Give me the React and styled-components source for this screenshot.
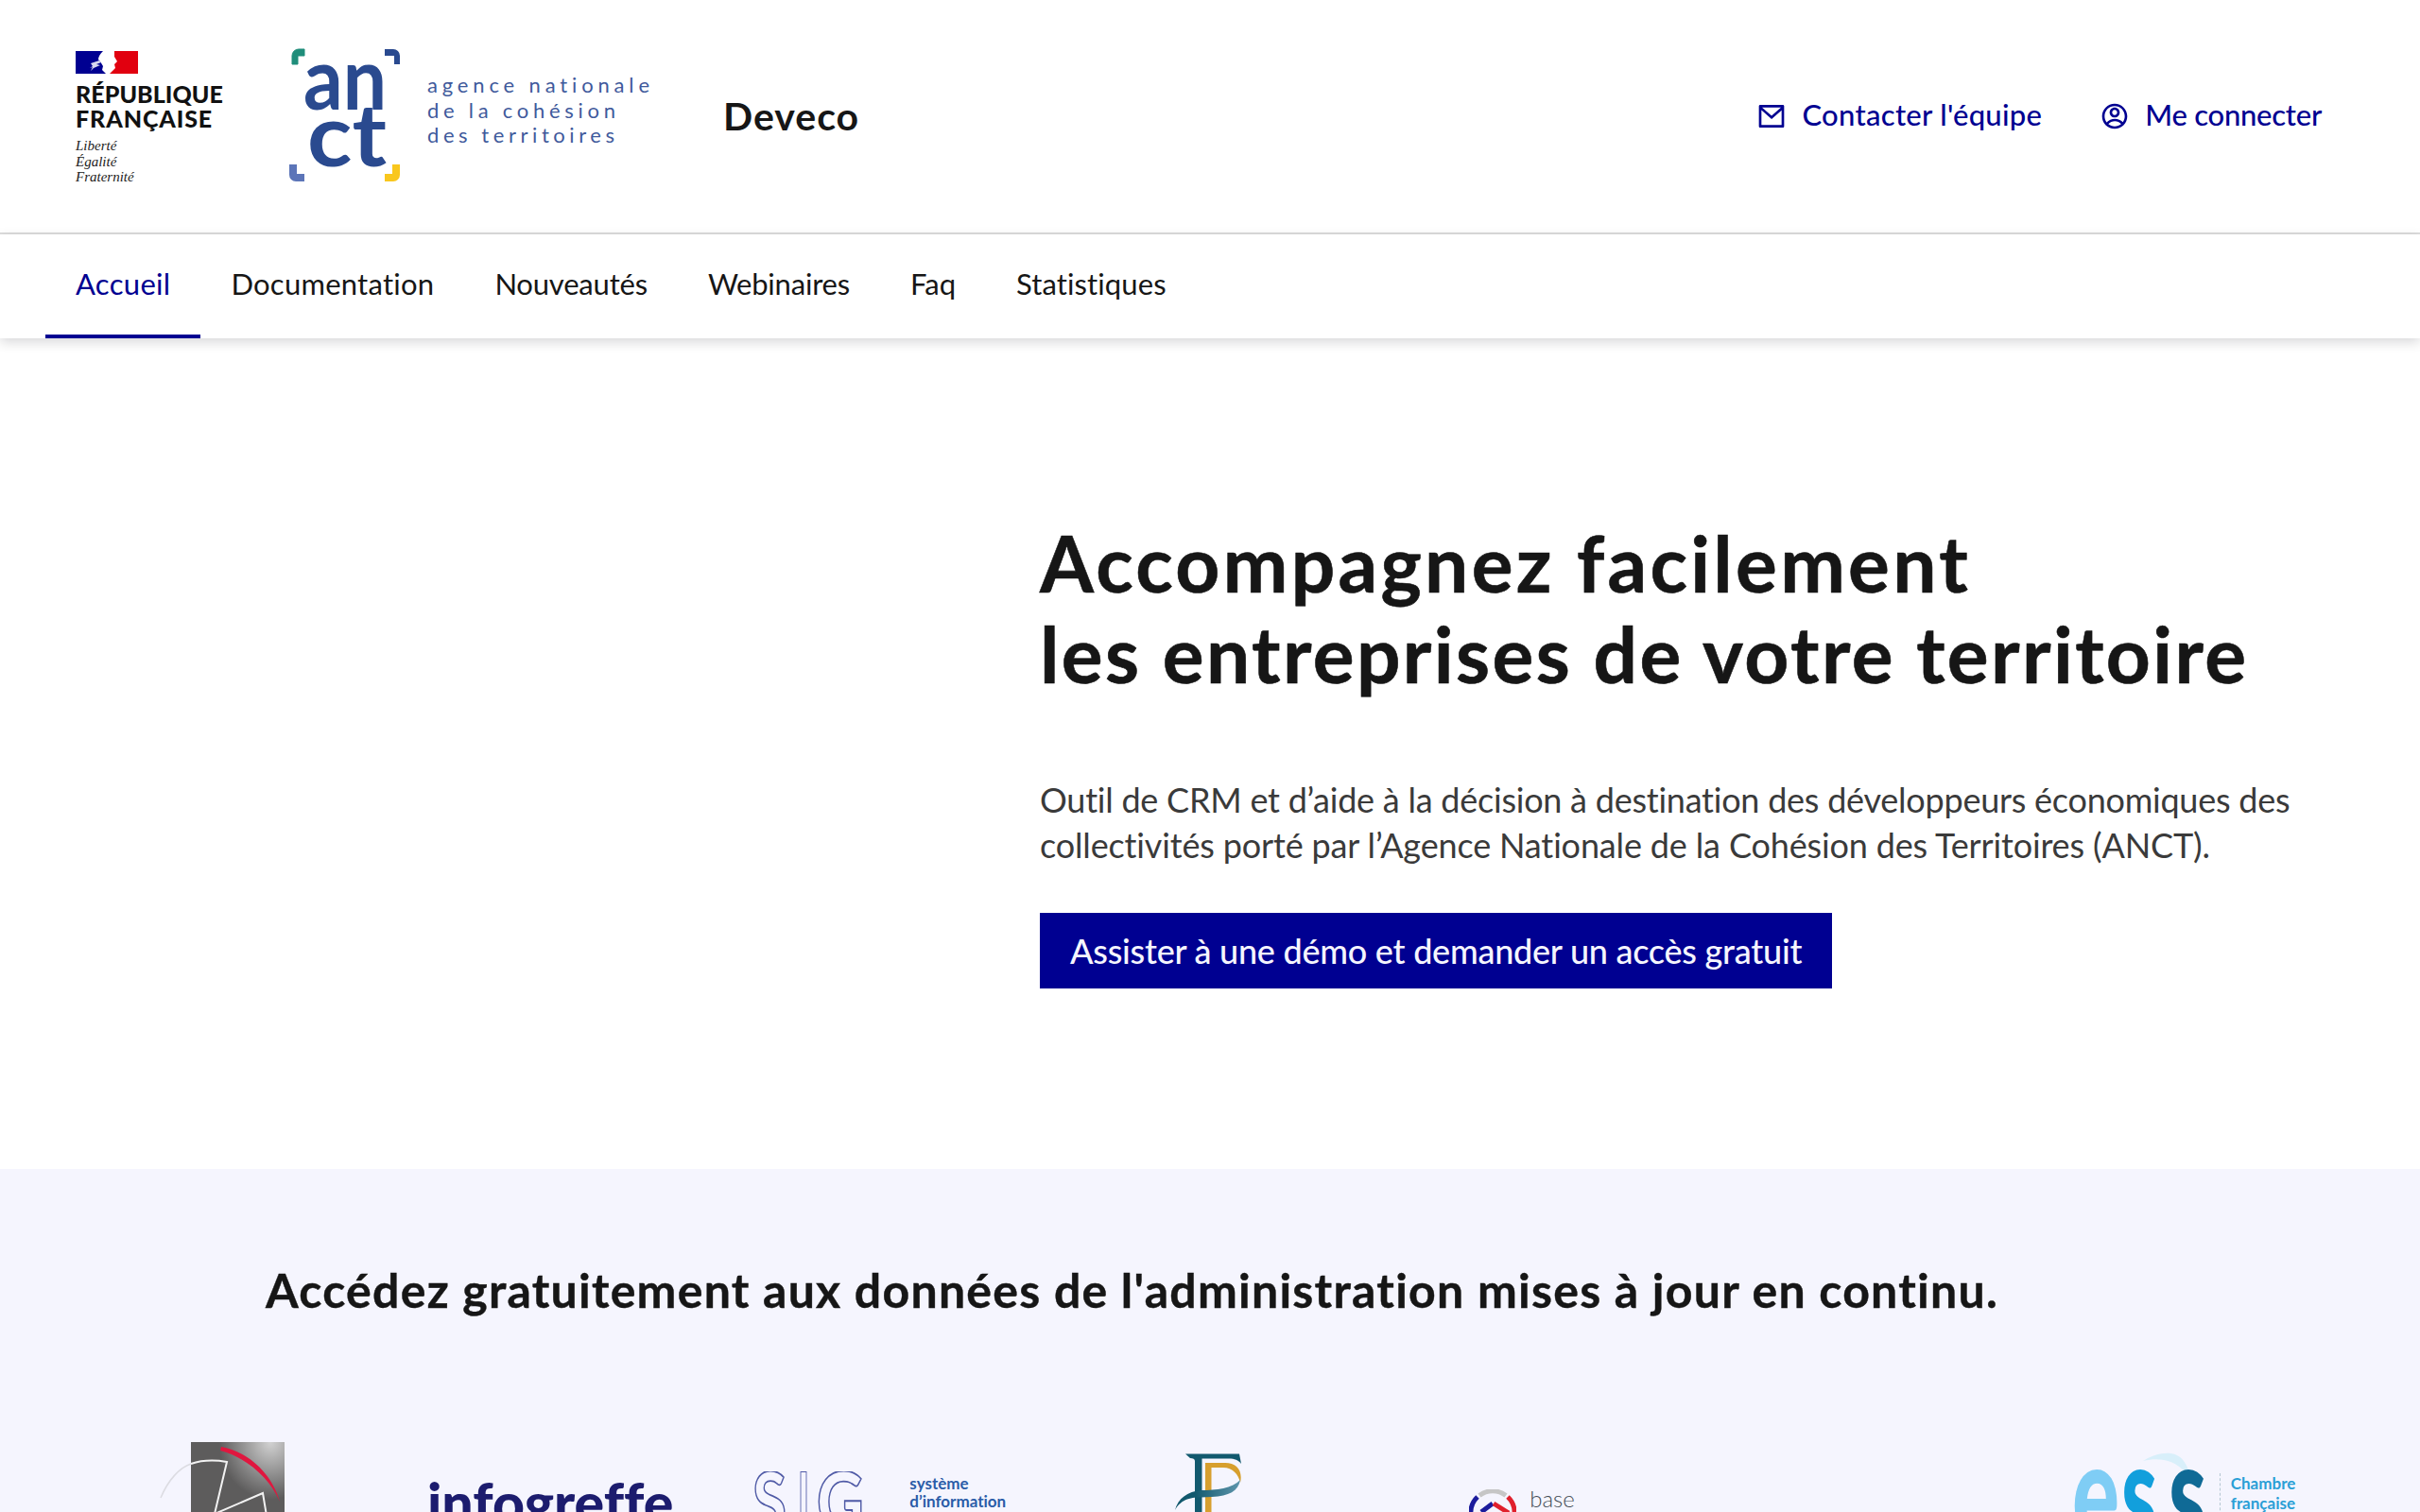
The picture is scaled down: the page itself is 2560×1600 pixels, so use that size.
import React from 'react';
import styled, { createGlobalStyle } from 'styled-components';
import { RiMailLine, RiAccountCircleLine } from 'react-icons/ri';

const GlobalStyle = createGlobalStyle`
  html, body {
    margin: 0;
    padding: 0;
    overflow: hidden;
    background: #fff;
    font-family: Lato, "Open Sans", sans-serif;
    font-variant-ligatures: none;
    color: #161616;
  }
`;

const Page = styled.div`
  height: 1600px;
  overflow: hidden;
`;

const Header = styled.header`
  display: flex;
  align-items: flex-start;
  height: 246px;
  padding: 0 104px 0 80px;
  border-bottom: 2px solid #ddd;
`;

const Marianne = styled.div`
  width: 225px;
  padding-top: 54px;
`;

const Republique = styled.div`
  margin-top: 8px;
  font-size: 25px;
  line-height: 26px;
  font-weight: 900;
  color: #111;
`;

const RepubliqueLine = styled.span`
  display: block;
  letter-spacing: ${(p) => p.$spacing}px;
`;

const Devise = styled.div`
  margin-top: 8px;
  font-family: "Liberation Serif", serif;
  font-style: italic;
  font-size: 15px;
  line-height: 16.5px;
  color: #222;
`;

const Anct = styled.svg`
  display: block;
  margin-top: 50px;
  flex: none;
`;

const Service = styled.div`
  margin: 98px 0 0 60px;
  font-size: 41px;
  line-height: 50px;
  font-weight: 700;
  letter-spacing: 1px;
`;

const Tools = styled.div`
  display: flex;
  gap: 61px;
  margin: 101px 0 0 auto;
`;

const Tool = styled.a`
  display: flex;
  align-items: center;
  gap: 16px;
  font-size: 31px;
  line-height: 40px;
  font-weight: 500;
  letter-spacing: ${(p) => p.$spacing}px;
  color: #000091;
  svg {
    width: 32px;
    height: 32px;
    margin-top: 3px;
  }
`;

const Nav = styled.nav`
  position: relative;
  display: flex;
  height: 110px;
  padding-left: 48px;
  background: #fff;
  box-shadow: 0 4px 12px rgba(0, 0, 18, 0.16);
`;

const NavItem = styled.a`
  display: flex;
  align-items: center;
  padding: 0 32px 3px;
  font-size: 31px;
  letter-spacing: ${(p) => p.$spacing}px;
  color: ${(p) => (p.$active ? '#000091' : '#161616')};
  border-bottom: 4px solid ${(p) => (p.$active ? '#000091' : 'transparent')};
  box-sizing: border-box;
`;

const Hero = styled.section`
  height: 879px;
  box-sizing: border-box;
  padding: 189px 0 0 1100px;
`;

const HeroTitle = styled.h1`
  margin: 0;
  font-size: 82px;
  line-height: 96px;
  font-weight: 700;
  -webkit-text-stroke: 0.6px #161616;
  color: #161616;
`;

const HeroText = styled.p`
  margin: 83px 0 0;
  font-size: 36px;
  line-height: 48px;
  color: #3a3a3a;
`;

const Line = styled.span`
  display: block;
  letter-spacing: ${(p) => p.$spacing}px;
`;

const HeroButton = styled.button`
  display: block;
  margin-top: 48px;
  height: 80px;
  padding: 0 32px;
  border: 0;
  background: #000091;
  color: #f5f5fe;
  font-family: inherit;
  font-size: 36px;
  font-weight: 500;
  font-variant-ligatures: none;
  letter-spacing: -0.25px;
`;

const Band = styled.section`
  background: #f5f5fe;
  height: 400px;
  padding-top: 96px;
  box-sizing: border-box;
`;

const BandTitle = styled.h2`
  margin: 0 0 0 281px;
  font-size: 50px;
  line-height: 64px;
  font-weight: 700;
  letter-spacing: 1.25px;
  -webkit-text-stroke: 0.4px #161616;
`;

const LogoRow = styled.div`
  display: flex;
  align-items: flex-start;
  margin-top: 129px;
  padding-left: 168px;
`;

const LogoSlot = styled.div`
  flex: none;
  margin-left: ${(p) => p.$left}px;
  margin-top: ${(p) => p.$top}px;
`;

const Infogreffe = styled.div`
  font-size: 59px;
  line-height: 84px;
  font-weight: 900;
  color: #1c1c6e;
`;

const SmallBlue = styled.div`
  font-size: 17px;
  line-height: ${(p) => p.$lh}px;
  font-weight: 700;
  color: ${(p) => p.$color};
`;

const SigLogo = styled.div`
  display: flex;
  gap: 44px;
  align-items: flex-start;
`;

const SigSide = styled.div`
  margin-top: 3px;
`;

const BaseLogo = styled.div`
  display: flex;
  gap: 14px;
  align-items: flex-start;
`;

const BaseWord = styled.div`
  margin-top: -5px;
  font-size: 24px;
  line-height: 30px;
  font-weight: 300;
  color: #444c55;
`;

const EssLogo = styled.div`
  display: flex;
  align-items: flex-start;
  gap: 11px;
`;

const EssSide = styled.div`
  margin-top: 25px;
  padding-left: 11px;
  height: 60px;
  border-left: 1px dashed #b4c6d2;
`;

const LogoSvg = styled.svg`
  display: block;
`;

const Flag = () => (
  <LogoSvg width="66" height="24" viewBox="0 0 66 24">
    <rect width="66" height="24" fill="#fff" />
    <path d="M0 0H29C26 3 24 6 24 9L26 11L29 16L28 20L32 24H0Z" fill="#000091" />
    <path d="M41 0H66V24H36L39 21L42 18L41 14L44 11L41 6Z" fill="#e1000f" />
    <path d="M16 13l9-3 2 2-5 2 4 1-7 3-3 3 2-4-3 1 3-2z" fill="#fff" opacity="0.85" />
  </LogoSvg>
);

const AnctLogo = () => (
  <Anct width="400" height="144" viewBox="0 0 400 144">
    <path d="M17 2h-6a7 7 0 0 0-7 7v9h6V9h7z" fill="#1f8d7a" stroke="#1f8d7a" strokeWidth="1" />
    <path d="M102 2h9a7 7 0 0 1 7 7v9h-6V9h-10z" fill="#2a4a8f" />
    <path d="M1 124v11a7 7 0 0 0 7 7h9v-8h-8v-10z" fill="#5c75b8" />
    <path d="M118 124v11a7 7 0 0 1-7 7h-9v-8h8v-10z" fill="#f9c71d" />
    <text x="16" y="66" fontFamily="Lato" fontSize="92" fontWeight="700" fill="#2a4a8f" textLength="88" lengthAdjust="spacingAndGlyphs">an</text>
    <text x="20" y="126" fontFamily="Lato" fontSize="92" fontWeight="700" fill="#2a4a8f" textLength="84" lengthAdjust="spacingAndGlyphs">ct</text>
    <g fontFamily="Lato" fontSize="22" fill="#3f5a9c">
      <text x="147" y="48" textLength="235">agence nationale</text>
      <text x="147" y="75" textLength="199">de la cohésion</text>
      <text x="147" y="101" textLength="198">des territoires</text>
    </g>
  </Anct>
);

const GreffeLogo = () => (
  <LogoSvg width="133" height="110" viewBox="0 0 133 110">
    <defs>
      <radialGradient id="greffe" cx="0.85" cy="0" r="0.55">
        <stop offset="0" stopColor="#d2d2d2" />
        <stop offset="1" stopColor="#5d5c5c" />
      </radialGradient>
    </defs>
    <rect x="34" width="99" height="110" fill="url(#greffe)" />
    <path d="M66 5C95 10 120 34 128 63C118 40 95 17 65 9Z" fill="#e0173f" />
    <path d="M2 59C10 40 22 27 34 23" fill="none" stroke="#dcdce2" strokeWidth="1.5" />
    <path d="M34 23C46 19 60 19 72 21L59 76" fill="none" stroke="#f2f2f2" strokeWidth="2" />
    <path d="M59 76L110 54L116 90" fill="none" stroke="#f2f2f2" strokeWidth="2" />
  </LogoSvg>
);

const SigMark = () => (
  <LogoSvg width="122" height="70" viewBox="0 0 122 70">
    <g fontFamily="Lato" fontSize="88" fontWeight="900" fill="none" stroke="#4f5aa6" strokeWidth="1.8">
      <text x="0" y="64" textLength="36" lengthAdjust="spacingAndGlyphs">S</text>
      <text x="48" y="64" textLength="12" lengthAdjust="spacingAndGlyphs">I</text>
      <text x="68" y="64" textLength="50" lengthAdjust="spacingAndGlyphs">G</text>
    </g>
  </LogoSvg>
);

const FpMark = () => (
  <LogoSvg width="75" height="70" viewBox="0 0 75 70">
    <defs>
      <linearGradient id="swoosh" x1="0" y1="0" x2="1" y2="0">
        <stop offset="0.3" stopColor="#12596e" />
        <stop offset="1" stopColor="#5f96ad" />
      </linearGradient>
    </defs>
    <path d="M33 12H54C66 12 73 20 70 33C68 24 62 17 52 17H39.5V70H33Z" fill="#d79f2e" />
    <path d="M12 2.5H69L71 13C68 9 64 7.5 58 7.5H29.5V70H22V10C22 8 20 7 17 7Z" fill="#12596e" />
    <path d="M1 62C4 50 14 42 29 41C44 41 62 39 70 30C68 42 58 47 40 48C26 49 10 46 1 62Z" fill="url(#swoosh)" />
  </LogoSvg>
);

const BaseMark = () => (
  <LogoSvg width="50" height="40" viewBox="0 0 50 40">
    <g fill="none" strokeWidth="5">
      <path d="M11 6.5A23 23 0 0 1 39 6.5" stroke="#c6c6c6" />
      <path d="M9 8A23 23 0 0 0 2 27" stroke="#1c1c9c" />
      <path d="M41 8A23 23 0 0 1 48 27" stroke="#e0202c" />
      <path d="M13 24L25 15" stroke="#1c1c9c" />
      <path d="M26 15L42 25" stroke="#e0202c" />
    </g>
  </LogoSvg>
);

const EssMark = () => (
  <LogoSvg width="145" height="110" viewBox="0 0 145 110">
    <path d="M75 12C90 2 110 0 118 12C125 22 124 28 125 34C118 16 100 6 75 12Z" fill="#d8effa" />
    <g fontFamily="Lato" fontSize="150" fontWeight="900">
      <text x="0" y="100" fill="#7fcdf5" textLength="50" lengthAdjust="spacingAndGlyphs">e</text>
      <text x="52" y="100" fill="#129fdc" textLength="38" lengthAdjust="spacingAndGlyphs">s</text>
      <text x="102" y="100" fill="#0f6a96" textLength="40" lengthAdjust="spacingAndGlyphs">s</text>
    </g>
  </LogoSvg>
);

const navItems = [
  { label: 'Accueil', spacing: 0.3, active: true },
  { label: 'Documentation', spacing: 0.25 },
  { label: 'Nouveautés', spacing: -0.2 },
  { label: 'Webinaires', spacing: -0.2 },
  { label: 'Faq', spacing: 0 },
  { label: 'Statistiques', spacing: 0.1 },
];

export default function App() {
  return (
    <Page>
      <GlobalStyle />
      <Header>
        <Marianne>
          <Flag />
          <Republique>
            <RepubliqueLine $spacing={0.05}>RÉPUBLIQUE</RepubliqueLine>
            <RepubliqueLine $spacing={0.9}>FRANÇAISE</RepubliqueLine>
          </Republique>
          <Devise>
            Liberté
            <br />
            Égalité
            <br />
            Fraternité
          </Devise>
        </Marianne>
        <AnctLogo />
        <Service>Deveco</Service>
        <Tools>
          <Tool $spacing={0.3}>
            <RiMailLine />
            Contacter l'équipe
          </Tool>
          <Tool $spacing={-0.25}>
            <RiAccountCircleLine />
            Me connecter
          </Tool>
        </Tools>
      </Header>
      <Nav>
        {navItems.map((item) => (
          <NavItem key={item.label} $active={item.active} $spacing={item.spacing}>
            {item.label}
          </NavItem>
        ))}
      </Nav>
      <Hero>
        <HeroTitle>
          <Line $spacing={3.3}>Accompagnez facilement</Line>
          <Line $spacing={2.4}>les entreprises de votre territoire</Line>
        </HeroTitle>
        <HeroText>
          <Line $spacing={-0.24}>Outil de CRM et d’aide à la décision à destination des développeurs économiques des</Line>
          <Line $spacing={-0.15}>collectivités porté par l’Agence Nationale de la Cohésion des Territoires (ANCT).</Line>
        </HeroText>
        <HeroButton>Assister à une démo et demander un accès gratuit</HeroButton>
      </Hero>
      <Band>
        <BandTitle>Accédez gratuitement aux données de l'administration mises à jour en continu.</BandTitle>
        <LogoRow>
          <LogoSlot $left={0} $top={0}>
            <GreffeLogo />
          </LogoSlot>
          <LogoSlot $left={151} $top={22}>
            <Infogreffe>infogreffe</Infogreffe>
          </LogoSlot>
          <LogoSlot $left={84} $top={31}>
            <SigLogo>
              <SigMark />
              <SigSide>
                <SmallBlue $color="#2a5ca8" $lh={19}>système</SmallBlue>
                <SmallBlue $color="#2a5ca8" $lh={19}>d’information</SmallBlue>
              </SigSide>
            </SigLogo>
          </LogoSlot>
          <LogoSlot $left={178} $top={10}>
            <FpMark />
          </LogoSlot>
          <LogoSlot $left={237} $top={50}>
            <BaseLogo>
              <BaseMark />
              <BaseWord>base</BaseWord>
            </BaseLogo>
          </LogoSlot>
          <LogoSlot $left={526} $top={8}>
            <EssLogo>
              <EssMark />
              <EssSide>
                <SmallBlue $color="#2a9fd6" $lh={21}>Chambre</SmallBlue>
                <SmallBlue $color="#2a9fd6" $lh={21}>française</SmallBlue>
              </EssSide>
            </EssLogo>
          </LogoSlot>
        </LogoRow>
      </Band>
    </Page>
  );
}
